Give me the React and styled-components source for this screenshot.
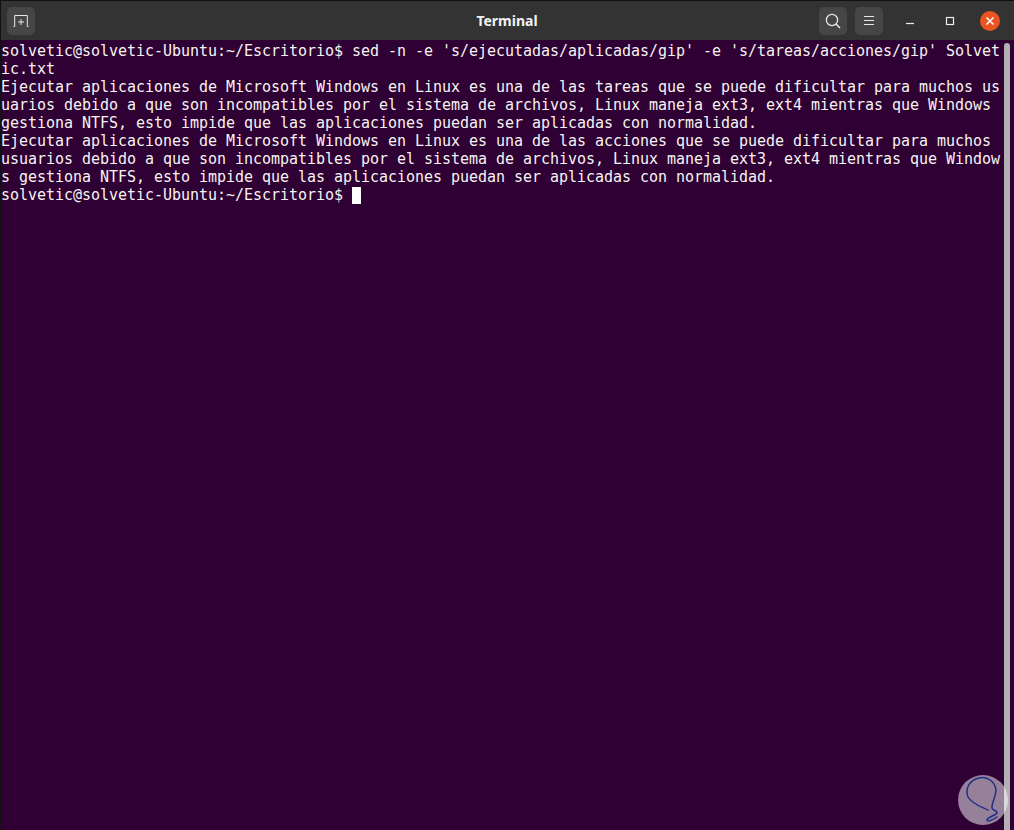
import React from "react";
import styled, { createGlobalStyle } from "styled-components";

const Global = createGlobalStyle`
  html, body {
    margin: 0;
    padding: 0;
    background: #000;
  }
`;

const Win = styled.div`
  position: relative;
  width: 1014px;
  height: 830px;
  display: flex;
  flex-direction: column;
  overflow: hidden;
  background: #2f0033;
  box-sizing: border-box;
  border-left: 1px solid #111;
`;

const Header = styled.header`
  height: 40px;
  flex: none;
  box-sizing: border-box;
  border-top: 1px solid #111;
  padding: 4px 14px 3px 6px;
  background: #333333;
  display: grid;
  grid-template-columns: 1fr auto 1fr;
  align-items: center;
`;

const Group = styled.div`
  display: flex;
  align-items: center;
  justify-content: ${(p) => (p.end ? "flex-end" : "flex-start")};
`;

const HeadBtn = styled.div`
  width: 28px;
  height: 28px;
  border-radius: 5px;
  background: #464646;
  display: flex;
  align-items: center;
  justify-content: center;
  margin-left: ${(p) => p.gap || 0}px;
`;

const Title = styled.div`
  color: #f2f2f2;
  font: bold 14px "Noto Sans", sans-serif;
  padding-left: 7px;
  margin-bottom: 2px;
`;

const WinBtn = styled.div`
  width: 20px;
  height: 20px;
  border-radius: 50%;
  display: flex;
  align-items: center;
  justify-content: center;
  margin-left: ${(p) => p.gap || 0}px;
  background: ${(p) => (p.close ? "#e95420" : "transparent")};
`;

const Body = styled.div`
  flex: 1;
  display: flex;
  min-height: 0;
`;

const Screen = styled.pre`
  margin: 0;
  flex: none;
  width: 1003px;
  padding-top: 2px;
  box-sizing: border-box;
  color: #f6f4f2;
  font: 15px/18px "DejaVu Sans Mono", monospace;
  letter-spacing: -0.03px;
  white-space: normal;
`;

const Line = styled.div`
  width: 1000px;
  white-space: pre-wrap;
  word-break: break-all;
`;

const Cursor = styled.span`
  display: inline-block;
  width: 9px;
  height: 17px;
  background: #fff;
  vertical-align: -4px;
`;

const Scroll = styled.div`
  width: 6px;
  flex: none;
  margin-top: 3px;
  background: #b3b0b4;
  border-radius: 3px 3px 0 0;
`;

const Mark = styled.svg`
  position: absolute;
  right: 6px;
  bottom: 5px;
  width: 50px;
  height: 50px;
`;

const lines = [
  "solvetic@solvetic-Ubuntu:~/Escritorio$ sed -n -e 's/ejecutadas/aplicadas/gip' -e 's/tareas/acciones/gip' Solvetic.txt",
  "Ejecutar aplicaciones de Microsoft Windows en Linux es una de las tareas que se puede dificultar para muchos usuarios debido a que son incompatibles por el sistema de archivos, Linux maneja ext3, ext4 mientras que Windows gestiona NTFS, esto impide que las aplicaciones puedan ser aplicadas con normalidad.",
  "Ejecutar aplicaciones de Microsoft Windows en Linux es una de las acciones que se puede dificultar para muchos usuarios debido a que son incompatibles por el sistema de archivos, Linux maneja ext3, ext4 mientras que Windows gestiona NTFS, esto impide que las aplicaciones puedan ser aplicadas con normalidad.",
];

const App = () => (
  <Win>
    <Global />
    <Header>
      <Group>
        <HeadBtn>
          <svg width="16" height="14" viewBox="0 0 16 14" fill="none" stroke="#e8e8e8" strokeWidth="1">
            <path d="M0.5 12.5h1.2V1.5h12.6v11h1.2" />
            <path d="M5 8h6M8 5v6" />
          </svg>
        </HeadBtn>
      </Group>
      <Title>Terminal</Title>
      <Group end>
        <HeadBtn>
          <svg width="16" height="16" viewBox="0 0 16 16" fill="none" stroke="#e8e8e8" strokeWidth="1.3">
            <circle cx="7" cy="7" r="5.6" />
            <path d="M11 11l4 4" strokeWidth="1.6" />
          </svg>
        </HeadBtn>
        <HeadBtn gap={8}>
          <svg width="12" height="10" viewBox="0 0 12 10" fill="none" stroke="#e8e8e8" strokeWidth="1">
            <path d="M1 0.5h10M1 4.5h10M1 8.5h10" />
          </svg>
        </HeadBtn>
        <WinBtn gap={17}>
          <svg width="10" height="10" viewBox="0 0 10 10" fill="none" stroke="#eee" strokeWidth="1.2">
            <path d="M1 7.5h8" />
          </svg>
        </WinBtn>
        <WinBtn gap={20}>
          <svg width="10" height="10" viewBox="0 0 10 10" fill="none" stroke="#eee" strokeWidth="1.2">
            <rect x="1.5" y="1.5" width="7" height="7" />
          </svg>
        </WinBtn>
        <WinBtn gap={20} close>
          <svg width="10" height="10" viewBox="0 0 10 10" fill="none" stroke="#fff" strokeWidth="1.6">
            <path d="M1.5 1.5l7 7M8.5 1.5l-7 7" />
          </svg>
        </WinBtn>
      </Group>
    </Header>
    <Body>
      <Screen>
        {lines.map((l, i) => (
          <Line key={i}>{l}</Line>
        ))}
        <Line>
          {"solvetic@solvetic-Ubuntu:~/Escritorio$ "}
          <Cursor />
        </Line>
      </Screen>
      <Scroll />
    </Body>
    <Mark viewBox="0 0 50 50">
      <circle cx="25" cy="25" r="25" fill="#fff" fillOpacity="0.5" />
      <path
        d="M30 35C24 32 14 29 10 22C7 14 11 5 21 3C30 1 37 7 38 15C38 22 34 26 34 32C33 36 40 35 39 38C37 41 29 42 29 45C29 48 36 44 39 42"
        fill="none"
        stroke="#1f2f86"
        strokeWidth="1.5"
        strokeLinecap="round"
        strokeLinejoin="round"
      />
    </Mark>
  </Win>
);

export default App;
